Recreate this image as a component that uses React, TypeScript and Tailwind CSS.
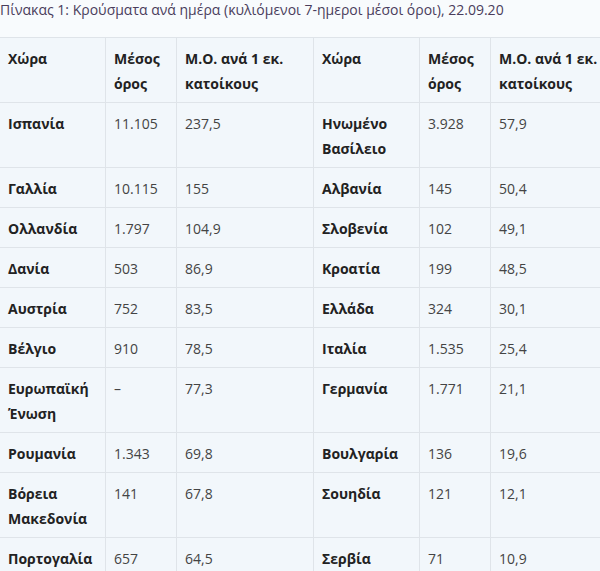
const rows: [string, string, string, string, string, string][] = [
  ['Ισπανία', '11.105', '237,5', 'Ηνωμένο Βασίλειο', '3.928', '57,9'],
  ['Γαλλία', '10.115', '155', 'Αλβανία', '145', '50,4'],
  ['Ολλανδία', '1.797', '104,9', 'Σλοβενία', '102', '49,1'],
  ['Δανία', '503', '86,9', 'Κροατία', '199', '48,5'],
  ['Αυστρία', '752', '83,5', 'Ελλάδα', '324', '30,1'],
  ['Βέλγιο', '910', '78,5', 'Ιταλία', '1.535', '25,4'],
  ['Ευρωπαϊκή Ένωση', '–', '77,3', 'Γερμανία', '1.771', '21,1'],
  ['Ρουμανία', '1.343', '69,8', 'Βουλγαρία', '136', '19,6'],
  ['Βόρεια Μακεδονία', '141', '67,8', 'Σουηδία', '121', '12,1'],
  ['Πορτογαλία', '657', '64,5', 'Σερβία', '71', '10,9'],
];

const headers = ['Χώρα', 'Μέσος όρος', 'Μ.Ο. ανά 1 εκ. κατοίκους', 'Χώρα', 'Μέσος όρος', 'Μ.Ο. ανά 1 εκ. κατοίκους'];
const widths = [106, 71, 137, 106, 71, 137];

export default function App() {
  return (
    <div
      className="w-[600px] h-[571px] overflow-hidden bg-[#f8fbfd] text-[14px]"
      style={{ fontFamily: '"Open Sans", "Noto Sans", sans-serif' }}
    >
      <p className="leading-[20px] text-[#4a3d5c] mb-[17px]">
        Πίνακας 1: Κρούσματα ανά ημέρα (κυλιόμενοι 7-ημεροι μέσοι όροι), 22.09.20
      </p>
      <table className="table-fixed border-collapse ml-[-1px] w-[628px] bg-[#f2f7fb]">
        <colgroup>
          {widths.map((w, i) => (
            <col key={i} style={{ width: w }} />
          ))}
        </colgroup>
        <thead>
          <tr>
            {headers.map((h, i) => (
              <th
                key={i}
                className="border border-[#dfe4e9] text-left align-top font-bold text-[#222] leading-[25px] pt-2 pb-[6px] px-2"
              >
                {h}
              </th>
            ))}
          </tr>
        </thead>
        <tbody>
          {rows.map((r, ri) => (
            <tr key={ri}>
              {r.map((c, ci) => (
                <td
                  key={ci}
                  className={
                    'border border-[#dfe4e9] align-top leading-[25px] pt-2 pb-[6px] px-2 ' +
                    (ci % 3 === 0 ? 'font-bold text-[#222]' : 'text-[#444]')
                  }
                >
                  {c}
                </td>
              ))}
            </tr>
          ))}
        </tbody>
      </table>
    </div>
  );
}
